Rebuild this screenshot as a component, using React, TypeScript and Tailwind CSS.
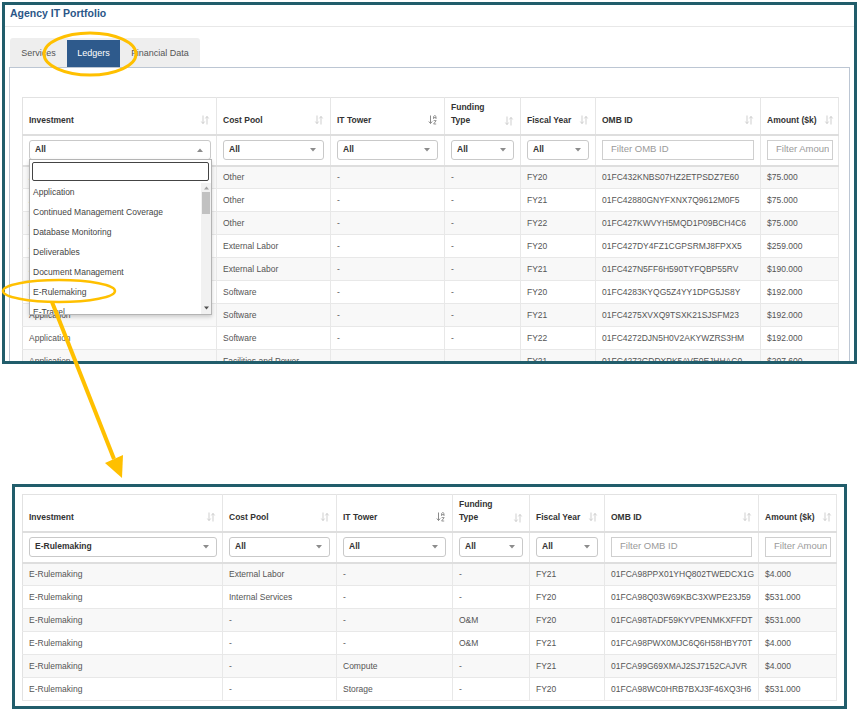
import React from "react";

type Row = string[];

const topRows: Row[] = [
  ["Application", "Other", "-", "-", "FY20", "01FC432KNBS07HZ2ETPSDZ7E60", "$75.000"],
  ["Application", "Other", "-", "-", "FY21", "01FC42880GNYFXNX7Q9612M0F5", "$75.000"],
  ["Application", "Other", "-", "-", "FY22", "01FC427KWVYH5MQD1P09BCH4C6", "$75.000"],
  ["Application", "External Labor", "-", "-", "FY20", "01FC427DY4FZ1CGPSRMJ8FPXX5", "$259.000"],
  ["Application", "External Labor", "-", "-", "FY21", "01FC427N5FF6H590TYFQBP55RV", "$190.000"],
  ["Application", "Software", "-", "-", "FY20", "01FC4283KYQG5Z4YY1DPG5JS8Y", "$192.000"],
  ["Application", "Software", "-", "-", "FY21", "01FC4275XVXQ9TSXK21SJSFM23", "$192.000"],
  ["Application", "Software", "-", "-", "FY22", "01FC4272DJN5H0V2AKYWZRS3HM", "$192.000"],
  ["Application", "Facilities and Power", "-", "-", "FY21", "01FC4272GDDXPK5AVE0EJHHAC0", "$207.600"],
];

const bottomRows: Row[] = [
  ["E-Rulemaking", "External Labor", "-", "-", "FY21", "01FCA98PPX01YHQ802TWEDCX1G", "$4.000"],
  ["E-Rulemaking", "Internal Services", "-", "-", "FY20", "01FCA98Q03W69KBC3XWPE23J59", "$531.000"],
  ["E-Rulemaking", "-", "-", "O&M", "FY20", "01FCA98TADF59KYVPENMKXFFDT", "$531.000"],
  ["E-Rulemaking", "-", "-", "O&M", "FY21", "01FCA98PWX0MJC6Q6H58HBY70T", "$4.000"],
  ["E-Rulemaking", "-", "Compute", "-", "FY21", "01FCA99G69XMAJ2SJ7152CAJVR", "$4.000"],
  ["E-Rulemaking", "-", "Storage", "-", "FY20", "01FCA98WC0HRB7BXJ3F46XQ3H6", "$531.000"],
];

const topCols = ["w-[194px]", "w-[114px]", "w-[114px]", "w-[76px]", "w-[75px]", "w-[165px]", "w-[78px]"];
const bottomCols = ["w-[200px]", "w-[114px]", "w-[116px]", "w-[77px]", "w-[75px]", "w-[154px]", "w-[78px]"];

const options = [
  "Application",
  "Continued Management Coverage",
  "Database Monitoring",
  "Deliverables",
  "Document Management",
  "E-Rulemaking",
  "E-Travel",
];

function SortIcon({ alpha }: { alpha?: boolean }) {
  if (alpha) {
    return (
      <svg width="10" height="10" viewBox="0 0 10 10" className="shrink-0">
        <path d="M2.5 0.5v8M0.8 6.5l1.7 2 1.7-2" stroke="#8a8a8a" fill="none" strokeWidth="1" />
        <path d="M5.6 4V1.4l1.2-1 1.2 1V4M5.6 2.6h2.4" stroke="#8a8a8a" fill="none" strokeWidth="0.9" />
        <path d="M5.6 5.6h2.6L5.6 9h2.6" stroke="#8a8a8a" fill="none" strokeWidth="0.9" />
      </svg>
    );
  }
  return (
    <svg width="10" height="10" viewBox="0 0 10 10" className="shrink-0">
      <path d="M3 0.5v8M1.4 6.6l1.6 2 1.6-2M7 9.5v-8M5.4 3.4l1.6-2 1.6 2" stroke="#cfcfcf" fill="none" strokeWidth="1" />
    </svg>
  );
}

function Caret({ up }: { up?: boolean }) {
  return (
    <svg width="6" height="4" viewBox="0 0 6 4" className="shrink-0">
      <path d={up ? "M0 4L3 0.5L6 4Z" : "M0 0L3 3.5L6 0Z"} fill="#8c8c8c" />
    </svg>
  );
}

function Select({ value, up }: { value: string; up?: boolean }) {
  return (
    <div className="flex h-[20px] w-full items-center justify-between rounded-[3px] border border-[#c9c9c9] bg-white pl-[5px] pr-[7px] text-[8.5px] font-bold text-[#333]">
      <span>{value}</span>
      <Caret up={up} />
    </div>
  );
}

function FilterInput({ placeholder }: { placeholder: string }) {
  return (
    <div className="flex h-[20px] w-full items-center border border-[#cfcfcf] bg-white pl-[8px] pr-[3px] text-[9.5px] text-[#9a9a9a]">
      <span className="block overflow-hidden whitespace-nowrap">{placeholder}</span>
    </div>
  );
}

function Dropdown() {
  return (
    <div className="absolute left-0 top-[19px] z-10 w-[183px] border border-[#b4b4b4] bg-white shadow-[0_2px_4px_rgba(0,0,0,0.18)]">
      <div className="px-[2px] pt-[2px]">
        <div className="h-[19px] rounded-[2px] border border-[#444] bg-white" />
      </div>
      <div className="relative mt-[2px] h-[131px] overflow-hidden">
        {options.map((o) => (
          <div key={o} className="flex h-[20px] items-center pl-[3px] text-[8.5px] text-[#444]">
            {o}
          </div>
        ))}
        <div className="absolute bottom-0 right-0 top-0 flex w-[10px] flex-col items-center bg-[#f1f1f1]">
          <svg width="5" height="4" viewBox="0 0 5 4" className="mt-[3px]">
            <path d="M0 3.5L2.5 0.5L5 3.5Z" fill="#a3a3a3" />
          </svg>
          <div className="mt-[2px] h-[22px] w-[8px] bg-[#c1c1c1]" />
          <div className="flex-1" />
          <svg width="5" height="4" viewBox="0 0 5 4" className="mb-[4px]">
            <path d="M0 0.5L2.5 3.5L5 0.5Z" fill="#505050" />
          </svg>
        </div>
      </div>
    </div>
  );
}

function LedgerTable({
  cols,
  width,
  investment,
  open,
  rows,
}: {
  cols: string[];
  width: string;
  investment: string;
  open?: boolean;
  rows: Row[];
}) {
  const th = "border-r border-[#e6e6e6] px-[6px] pb-[7px] align-bottom text-left font-bold";
  const fc = "border-r border-[#e6e6e6] px-[6px] align-top pt-[4px]";
  return (
    <table className={`${width} table-fixed border-collapse border border-[#e2e2e2] text-[8.5px] text-[#333]`}>
      <colgroup>
        {cols.map((c, i) => (
          <col key={i} className={c} />
        ))}
      </colgroup>
      <thead>
        <tr className="h-[37px]">
          <th className={th}>
            <div className="flex items-center justify-between">Investment<SortIcon /></div>
          </th>
          <th className={th}>
            <div className="flex items-center justify-between">Cost Pool<SortIcon /></div>
          </th>
          <th className={th}>
            <div className="flex items-center justify-between">IT Tower<SortIcon alpha /></div>
          </th>
          <th className={th}>
            <div className="flex items-end justify-between leading-[13px]">
              <span>Funding<br />Type</span>
              <span className="pb-[1px]"><SortIcon /></span>
            </div>
          </th>
          <th className={th}>
            <div className="flex items-center justify-between">Fiscal Year<SortIcon /></div>
          </th>
          <th className={th}>
            <div className="flex items-center justify-between">OMB ID<SortIcon /></div>
          </th>
          <th className={`${th} pr-[4px]`}>
            <div className="flex items-center justify-between whitespace-nowrap">Amount ($k)<SortIcon /></div>
          </th>
        </tr>
        <tr className="h-[31px] border-y-2 border-[#dedede]">
          <td className={`${fc} pr-[5px]`}>
            <div className="relative">
              <Select value={investment} up={open} />
              {open && <Dropdown />}
            </div>
          </td>
          <td className={fc}><Select value="All" /></td>
          <td className={fc}><Select value="All" /></td>
          <td className={fc}><Select value="All" /></td>
          <td className={fc}><Select value="All" /></td>
          <td className={fc}><FilterInput placeholder="Filter OMB ID" /></td>
          <td className={`${fc} pr-[5px]`}><FilterInput placeholder="Filter Amount" /></td>
        </tr>
      </thead>
      <tbody>
        {rows.map((r, i) => (
          <tr key={i} className={`h-[23px] border-b border-[#e8e8e8] ${i % 2 === 0 ? "bg-[#f8f8f8]" : "bg-white"}`}>
            {r.map((c, j) => (
              <td key={j} className="overflow-hidden whitespace-nowrap border-r border-[#e8e8e8] px-[6px] text-[#555]">
                {c}
              </td>
            ))}
          </tr>
        ))}
      </tbody>
    </table>
  );
}

export default function App() {
  return (
    <div className="relative h-[709px] w-[859px] overflow-hidden bg-white font-['Liberation_Sans',Arial,sans-serif]">
      {/* top panel: portfolio with open investment filter */}
      <div className="ml-[2px] mt-[2px] h-[362px] w-[855px] overflow-hidden border-[3px] border-[#215d6b] bg-white">
        <div className="h-[22px] border-b border-[#e8e8e8] pl-[5px] pt-[1px] text-[10.5px] font-bold text-[#2b5687]">
          Agency IT Portfolio
        </div>
        <div className="ml-[5px] mt-[11px] flex h-[29px] w-[190px] items-end rounded-t-[3px] bg-[#eeeeee] text-[9px] text-[#555]">
          <div className="flex h-[27px] w-[57px] items-center justify-center">Services</div>
          <div className="flex h-[27px] w-[53px] items-center justify-center bg-[#2e5a8c] text-white">Ledgers</div>
          <div className="flex h-[27px] w-[80px] items-center justify-center">Financial Data</div>
        </div>
        <div className="ml-[4px] h-[300px] w-[841px] border border-[#bcc6d3] pl-[12px] pt-[29px]">
          <LedgerTable cols={topCols} width="w-[816px]" investment="All" open rows={topRows} />
        </div>
      </div>

      {/* bottom panel: filtered result */}
      <div className="ml-[12px] mt-[120px] h-[225px] w-[835px] overflow-hidden border-[3px] border-[#215d6b] bg-white pl-[7px] pt-[7px]">
        <LedgerTable cols={bottomCols} width="w-[814px]" investment="E-Rulemaking" rows={bottomRows} />
      </div>

      {/* callout annotations */}
      <svg className="pointer-events-none absolute left-0 top-0 z-20" width="859" height="709" viewBox="0 0 859 709">
        <ellipse cx="90" cy="54" rx="46" ry="21" fill="none" stroke="#ffc000" strokeWidth="3" />
        <ellipse cx="59" cy="291" rx="56" ry="11" fill="none" stroke="#ffc000" strokeWidth="2.5" />
        <line x1="52" y1="302" x2="114" y2="459" stroke="#ffc000" strokeWidth="4" />
        <path d="M122 478L105 463L123 455Z" fill="#ffc000" />
      </svg>
    </div>
  );
}
